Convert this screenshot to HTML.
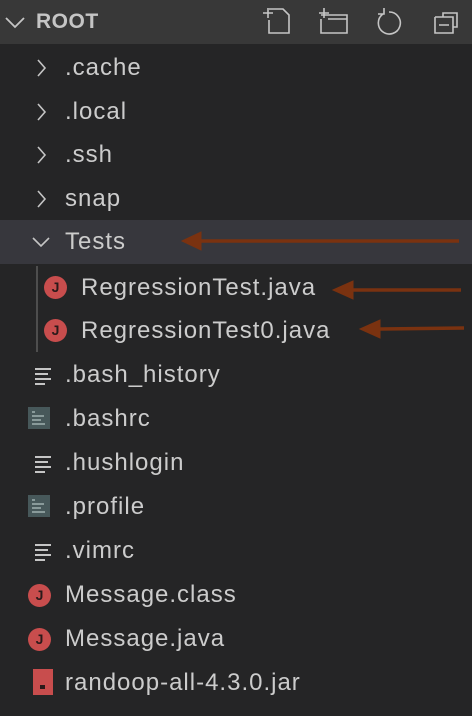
<!DOCTYPE html>
<html><head><meta charset="utf-8"><style>
body{margin:0;width:472px;height:716px;background:#252526;overflow:hidden;font-family:"Liberation Sans",sans-serif;color:#cccccc;position:relative}
.hdr{position:absolute;left:0;top:0;width:472px;height:44px;background:#383838}
.r{position:absolute;height:44px;line-height:44px;font-size:24px;letter-spacing:1px;white-space:nowrap}
svg{position:absolute}
.hl{position:absolute;left:0;top:220px;width:472px;height:44px;background:#37373d}
.ic{position:absolute;width:23px;height:23px;border-radius:50%;background:#c84d4d;color:#2a1a1a;font-weight:bold;font-size:14px;line-height:23px;text-align:center}
</style></head><body>
<div class="hdr"></div>
<svg style="left:4px;top:12px" width="22" height="20"><path d="M2 6 L11 15 L20 6" stroke="#c5c5c5" stroke-width="1.8" fill="none"/></svg>
<div class="r" style="left:36px;top:0;font-weight:bold;font-size:21px;letter-spacing:0.5px;color:#c5c5c5">ROOT</div>
<svg style="left:260px;top:6px" width="200" height="30" fill="none" stroke="#c5c5c5" stroke-width="1.6">
<path d="M9 3 H23 L29 9 V27 H9 V14 M3 7 H13 M8 2 V12"/>
<path d="M61 9 H87 V27 H61 V13 M59 7 H69 M64 2 V12 M68 13 H87"/>
<path d="M123 8 A11 11 0 1 0 129 6 M124 2 V8 H118"/>
<path d="M175 11 H183 V7 H197 V21 H193 M175 11 V27 H193 V11 H175 M179 19 H189"/>
</svg>
<div class="hl"></div>
<svg style="left:0;top:0" width="472" height="716" fill="none" stroke="#c5c5c5" stroke-width="1.6">
<path d="M38 60 L45 68 L38 76"/><path d="M38 104 L45 112 L38 120"/><path d="M38 147 L45 155 L38 163"/><path d="M38 191 L45 199 L38 207"/>
<path d="M33 238 L41 246 L49 238"/>
<path d="M37 266 V352" stroke="#585858"/>
<g stroke-width="2"><path d="M35 369 H51 M35 374 H48 M35 379 H51 M35 384 H45"/>
<path d="M35 545 H51 M35 550 H48 M35 555 H51 M35 560 H45"/>
<path d="M35 457 H51 M35 462 H48 M35 467 H51 M35 472 H45"/></g>
</svg>
<div class="r" style="left:65px;top:46px">.cache</div>
<div class="r" style="left:65px;top:90px">.local</div>
<div class="r" style="left:65px;top:133px">.ssh</div>
<div class="r" style="left:65px;top:177px">snap</div>
<div class="r" style="left:65px;top:220px">Tests</div>
<div class="ic" style="left:44px;top:276px">J</div>
<div class="r" style="left:81px;top:266px">RegressionTest.java</div>
<div class="ic" style="left:44px;top:319px">J</div>
<div class="r" style="left:81px;top:309px">RegressionTest0.java</div>
<div class="r" style="left:65px;top:353px">.bash_history</div>
<div style="position:absolute;left:28px;top:407px;width:22px;height:22px;background:#47585a"></div>
<svg style="left:28px;top:407px" width="22" height="22" stroke="#9fb0b0" stroke-width="1.4"><path d="M4 5 H7 M4 9 H16 M4 13 H13 M4 17 H17"/></svg>
<div class="r" style="left:65px;top:397px">.bashrc</div>
<div class="r" style="left:65px;top:441px">.hushlogin</div>
<div style="position:absolute;left:28px;top:495px;width:22px;height:22px;background:#47585a"></div>
<svg style="left:28px;top:495px" width="22" height="22" stroke="#9fb0b0" stroke-width="1.4"><path d="M4 5 H7 M4 9 H16 M4 13 H13 M4 17 H17"/></svg>
<div class="r" style="left:65px;top:485px">.profile</div>
<div class="r" style="left:65px;top:529px">.vimrc</div>
<div class="ic" style="left:28px;top:584px">J</div>
<div class="r" style="left:65px;top:573px">Message.class</div>
<div class="ic" style="left:28px;top:628px">J</div>
<div class="r" style="left:65px;top:617px">Message.java</div>
<div style="position:absolute;left:33px;top:669px;width:20px;height:26px;background:#c84d4d"></div>
<div style="position:absolute;left:40px;top:685px;width:5px;height:4px;background:#2a1a1a"></div>
<div class="r" style="left:65px;top:661px">randoop-all-4.3.0.jar</div>
<svg style="left:0;top:0" width="472" height="716">
<g fill="#7a3210" stroke="#7a3210">
<path d="M198 241 H459" stroke-width="3.5"/><path d="M182 241 L201 232 L201 250 Z" stroke-width="1"/>
<path d="M350 290 H461" stroke-width="3.5"/><path d="M333 290 L353 281 L353 299 Z" stroke-width="1"/>
<path d="M377 329 L464 328" stroke-width="3.5"/><path d="M360 329 L380 320 L380 338 Z" stroke-width="1"/>
</g></svg>
</body></html>
